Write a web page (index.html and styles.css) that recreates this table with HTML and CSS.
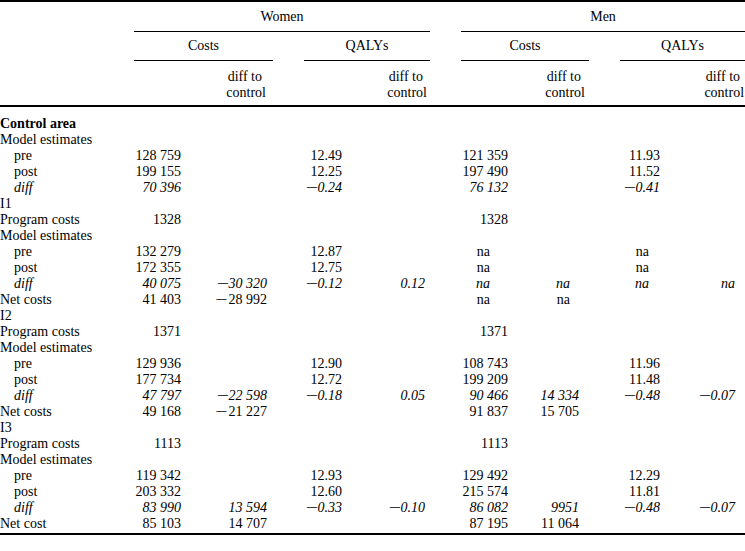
FILE: index.html
```html
<!DOCTYPE html>
<html lang="en">
<head>
<meta charset="utf-8">
<title>Costs and QALYs by intervention</title>
<link rel="stylesheet" href="styles.css">
</head>
<body>
<table class="results">
  <colgroup>
    <col class="c-label"><col class="c-n1"><col class="c-n2"><col class="c-gap"><col class="c-n3"><col class="c-n4"><col class="c-gap"><col class="c-n5"><col class="c-n6"><col class="c-gap"><col class="c-n7"><col class="c-n8">
  </colgroup>
  <thead>
    <tr class="h1">
      <th></th><th colspan="5" class="span">Women</th><th></th><th colspan="5" class="span">Men</th>
    </tr>
    <tr class="h2">
      <th></th><th colspan="2" class="span">Costs</th><th></th><th colspan="2" class="span">QALYs</th><th></th><th colspan="2" class="span">Costs</th><th></th><th colspan="2" class="span">QALYs</th>
    </tr>
    <tr class="h3">
      <th></th><th></th><th class="dc"><span class="l1">diff to</span><br>control</th><th></th><th></th><th class="dc"><span class="l1">diff to</span><br>control</th><th></th><th></th><th class="dc"><span class="l1">diff to</span><br>control</th><th></th><th></th><th class="dc"><span class="l1">diff to</span><br>control</th>
    </tr>
  </thead>
  <tbody>
    <tr class="first"><td class="group">Control area</td><td></td><td></td><td></td><td></td><td></td><td></td><td></td><td></td><td></td><td></td><td></td></tr>
    <tr><td>Model estimates</td><td></td><td></td><td></td><td></td><td></td><td></td><td></td><td></td><td></td><td></td><td></td></tr>
    <tr><td class="sub">pre</td><td>128 759</td><td></td><td></td><td>12.49</td><td></td><td></td><td>121 359</td><td></td><td></td><td>11.93</td><td></td></tr>
    <tr><td class="sub">post</td><td>199 155</td><td></td><td></td><td>12.25</td><td></td><td></td><td>197 490</td><td></td><td></td><td>11.52</td><td></td></tr>
    <tr class="diff"><td class="sub">diff</td><td>70 396</td><td></td><td></td><td><span class="neg">−</span>0.24</td><td></td><td></td><td>76 132</td><td></td><td></td><td><span class="neg">−</span>0.41</td><td></td></tr>
    <tr><td>I1</td><td></td><td></td><td></td><td></td><td></td><td></td><td></td><td></td><td></td><td></td><td></td></tr>
    <tr class="program"><td>Program costs</td><td>1328</td><td></td><td></td><td></td><td></td><td></td><td>1328</td><td></td><td></td><td></td><td></td></tr>
    <tr><td>Model estimates</td><td></td><td></td><td></td><td></td><td></td><td></td><td></td><td></td><td></td><td></td><td></td></tr>
    <tr><td class="sub">pre</td><td>132 279</td><td></td><td></td><td>12.87</td><td></td><td></td><td class="na">na</td><td></td><td></td><td class="na">na</td><td></td></tr>
    <tr><td class="sub">post</td><td>172 355</td><td></td><td></td><td>12.75</td><td></td><td></td><td class="na">na</td><td></td><td></td><td class="na">na</td><td></td></tr>
    <tr class="diff"><td class="sub">diff</td><td>40 075</td><td><span class="neg">−</span>30 320</td><td></td><td><span class="neg">−</span>0.12</td><td>0.12</td><td></td><td class="na">na</td><td class="na">na</td><td></td><td class="na">na</td><td class="na">na</td></tr>
    <tr><td>Net costs</td><td>41 403</td><td><span class="neg">−</span>28 992</td><td></td><td></td><td></td><td></td><td class="na">na</td><td class="na">na</td><td></td><td></td><td></td></tr>
    <tr><td>I2</td><td></td><td></td><td></td><td></td><td></td><td></td><td></td><td></td><td></td><td></td><td></td></tr>
    <tr class="program"><td>Program costs</td><td>1371</td><td></td><td></td><td></td><td></td><td></td><td>1371</td><td></td><td></td><td></td><td></td></tr>
    <tr><td>Model estimates</td><td></td><td></td><td></td><td></td><td></td><td></td><td></td><td></td><td></td><td></td><td></td></tr>
    <tr><td class="sub">pre</td><td>129 936</td><td></td><td></td><td>12.90</td><td></td><td></td><td>108 743</td><td></td><td></td><td>11.96</td><td></td></tr>
    <tr><td class="sub">post</td><td>177 734</td><td></td><td></td><td>12.72</td><td></td><td></td><td>199 209</td><td></td><td></td><td>11.48</td><td></td></tr>
    <tr class="diff"><td class="sub">diff</td><td>47 797</td><td><span class="neg">−</span>22 598</td><td></td><td><span class="neg">−</span>0.18</td><td>0.05</td><td></td><td>90 466</td><td>14 334</td><td></td><td><span class="neg">−</span>0.48</td><td><span class="neg">−</span>0.07</td></tr>
    <tr><td>Net costs</td><td>49 168</td><td><span class="neg">−</span>21 227</td><td></td><td></td><td></td><td></td><td>91 837</td><td>15 705</td><td></td><td></td><td></td></tr>
    <tr><td>I3</td><td></td><td></td><td></td><td></td><td></td><td></td><td></td><td></td><td></td><td></td><td></td></tr>
    <tr class="program"><td>Program costs</td><td>1113</td><td></td><td></td><td></td><td></td><td></td><td>1113</td><td></td><td></td><td></td><td></td></tr>
    <tr><td>Model estimates</td><td></td><td></td><td></td><td></td><td></td><td></td><td></td><td></td><td></td><td></td><td></td></tr>
    <tr><td class="sub">pre</td><td>119 342</td><td></td><td></td><td>12.93</td><td></td><td></td><td>129 492</td><td></td><td></td><td>12.29</td><td></td></tr>
    <tr><td class="sub">post</td><td>203 332</td><td></td><td></td><td>12.60</td><td></td><td></td><td>215 574</td><td></td><td></td><td>11.81</td><td></td></tr>
    <tr class="diff"><td class="sub">diff</td><td>83 990</td><td>13 594</td><td></td><td><span class="neg">−</span>0.33</td><td><span class="neg">−</span>0.10</td><td></td><td>86 082</td><td>9951</td><td></td><td><span class="neg">−</span>0.48</td><td><span class="neg">−</span>0.07</td></tr>
    <tr class="last"><td>Net cost</td><td>85 103</td><td>14 707</td><td></td><td></td><td></td><td></td><td>87 195</td><td>11 064</td><td></td><td></td><td></td></tr>
  </tbody>
</table>
</body>
</html>
```

FILE: styles.css
```css
html, body {
  margin: 0;
  padding: 0;
  background: #ffffff;
}

body {
  font-family: "Liberation Serif", "Times New Roman", serif;
  font-size: 14px;
  color: #000000;
}

.results {
  width: 745px;
  table-layout: fixed;
  border-collapse: separate;
  border-spacing: 0;
  border-top: 2px solid #000000;
  line-height: 16px;
}

.c-label { width: 134px; }
.c-n1 { width: 66px; }
.c-n2 { width: 73px; }
.c-gap { width: 31px; }
.c-n3 { width: 61px; }
.c-n4 { width: 65px; }
.c-n5 { width: 64px; }
.c-n6 { width: 64px; }
.c-n7 { width: 65px; }
.c-n8 { width: 60px; }

.results th,
.results td {
  padding: 0;
  font-weight: normal;
  white-space: nowrap;
}

/* header */
.h1 th {
  padding-top: 7px;
  padding-bottom: 6px;
}

.h2 th {
  padding-top: 6px;
  padding-bottom: 6px;
}

.span {
  text-align: center;
  border-bottom: 1px solid #000000;
}

.h3 th {
  padding-top: 8px;
  padding-bottom: 4px;
  border-bottom: 2px solid #000000;
}

.dc {
  text-align: right;
}

.l1 {
  padding-right: 4px;
}

.h3 th:nth-child(3) { padding-right: 7px; }
.h3 th:nth-child(6) { padding-right: 3px; }
.h3 th:nth-child(9) { padding-right: 4px; }
.h3 th:nth-child(12) { padding-right: 1px; }

/* body */
.results tbody td {
  height: 16px;
  text-align: right;
}

.results tbody td:first-child {
  text-align: left;
}

.results tbody td.sub {
  padding-left: 14px;
}

.results tbody td.group {
  font-weight: bold;
}

.first td {
  padding-top: 9px;
}

.last td {
  padding-bottom: 1px;
  border-bottom: 2px solid #000000;
}

.diff td {
  font-style: italic;
}

.results tbody td:nth-child(2) { padding-right: 19px; }
.results tbody td:nth-child(3) { padding-right: 6px; }
.results tbody td:nth-child(5) { padding-right: 23px; }
.results tbody td:nth-child(6) { padding-right: 5px; }
.results tbody td:nth-child(8) { padding-right: 17px; }
.results tbody td:nth-child(9) { padding-right: 10px; }
.results tbody td:nth-child(11) { padding-right: 25px; }
.results tbody td:nth-child(12) { padding-right: 10px; }

.program td:nth-child(2) { padding-right: 16px; }
.program td:nth-child(8) { padding-right: 15px; }

.results tbody td.na:nth-child(8) { padding-right: 35px; }
.results tbody td.na:nth-child(9) { padding-right: 19px; }
.results tbody td.na:nth-child(11) { padding-right: 36px; }

.neg {
  display: inline-block;
  width: 13px;
  text-align: left;
  transform: scaleX(1.55);
  transform-origin: 1px center;
}
```
